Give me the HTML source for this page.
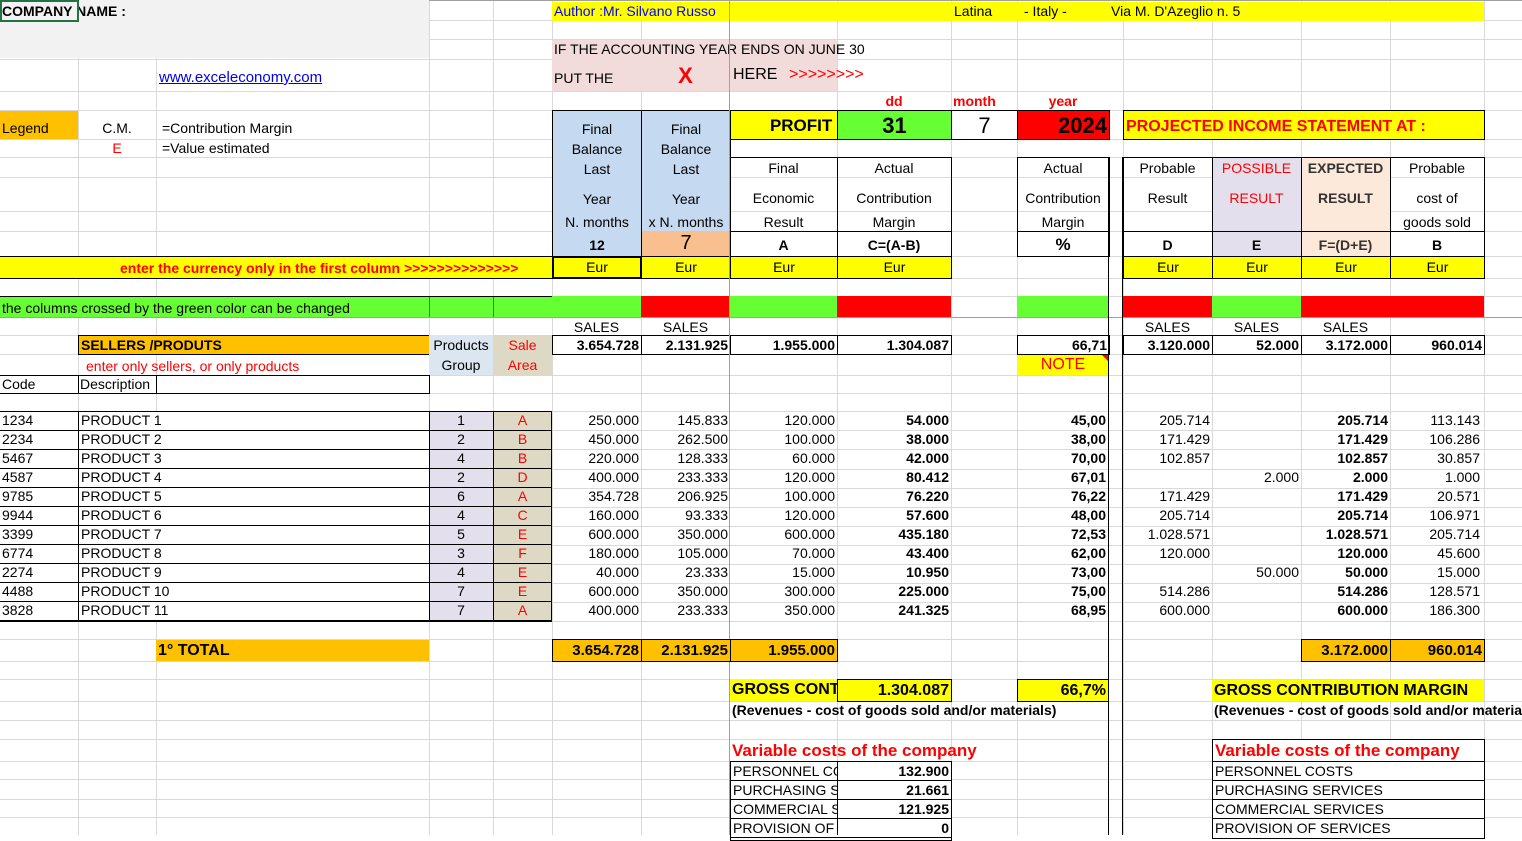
<!DOCTYPE html>
<html><head><meta charset="utf-8"><style>
body{margin:0;width:1522px;height:835px;overflow:hidden;background:#fff;position:relative;font-family:"Liberation Sans",Arial,sans-serif;color:#000}
.c{position:absolute;box-sizing:border-box;padding:0 2px;white-space:nowrap;overflow:hidden;font-size:14px}
.r{text-align:right}.m{text-align:center}.b{font-weight:bold}.k{border:1px solid #000}.red{color:#f00}
.y{background:#ffff00}.g{background:#66ff33}.rd{background:#ff0000}.o{background:#ffc000}.bl{background:#c5d9f1}.lv{background:#e4dfec}.pc{background:#fde9d9}.tn{background:#ddd9c4}.lb{background:#dce6f1}
</style></head><body>
<svg width="1522" height="835" style="position:absolute;left:0;top:0" stroke="#d9d9d9" stroke-width="1">
<g id="h">
<line x1="0" x2="1522" y1="20.5" y2="20.5"/><line x1="0" x2="1522" y1="39.5" y2="39.5"/><line x1="0" x2="1522" y1="59.5" y2="59.5"/><line x1="0" x2="1522" y1="91.5" y2="91.5"/><line x1="0" x2="1522" y1="110.5" y2="110.5"/><line x1="0" x2="1522" y1="139.5" y2="139.5"/><line x1="0" x2="1522" y1="157.5" y2="157.5"/><line x1="0" x2="1522" y1="177.5" y2="177.5"/><line x1="0" x2="1522" y1="211.5" y2="211.5"/><line x1="0" x2="1522" y1="231.5" y2="231.5"/><line x1="0" x2="1522" y1="256.5" y2="256.5"/><line x1="0" x2="1522" y1="278.5" y2="278.5"/><line x1="0" x2="1522" y1="296.5" y2="296.5"/><line x1="0" x2="1522" y1="335.5" y2="335.5"/><line x1="0" x2="1522" y1="354.5" y2="354.5"/><line x1="0" x2="1522" y1="375.5" y2="375.5"/><line x1="0" x2="1522" y1="393.5" y2="393.5"/><line x1="0" x2="1522" y1="411.5" y2="411.5"/><line x1="0" x2="1522" y1="430.5" y2="430.5"/><line x1="0" x2="1522" y1="449.5" y2="449.5"/><line x1="0" x2="1522" y1="469.5" y2="469.5"/><line x1="0" x2="1522" y1="488.5" y2="488.5"/><line x1="0" x2="1522" y1="507.5" y2="507.5"/><line x1="0" x2="1522" y1="526.5" y2="526.5"/><line x1="0" x2="1522" y1="545.5" y2="545.5"/><line x1="0" x2="1522" y1="564.5" y2="564.5"/><line x1="0" x2="1522" y1="583.5" y2="583.5"/><line x1="0" x2="1522" y1="602.5" y2="602.5"/><line x1="0" x2="1522" y1="621.5" y2="621.5"/><line x1="0" x2="1522" y1="639.5" y2="639.5"/><line x1="0" x2="1522" y1="661.5" y2="661.5"/><line x1="0" x2="1522" y1="679.5" y2="679.5"/><line x1="0" x2="1522" y1="701.5" y2="701.5"/><line x1="0" x2="1522" y1="720.5" y2="720.5"/><line x1="0" x2="1522" y1="739.5" y2="739.5"/><line x1="0" x2="1522" y1="761.5" y2="761.5"/><line x1="0" x2="1522" y1="779.5" y2="779.5"/><line x1="0" x2="1522" y1="799.5" y2="799.5"/><line x1="0" x2="1522" y1="817.5" y2="817.5"/>
</g>
<line x1="78.5" x2="78.5" y1="0" y2="835"/><line x1="156.5" x2="156.5" y1="0" y2="835"/><line x1="429.5" x2="429.5" y1="0" y2="835"/><line x1="493.5" x2="493.5" y1="0" y2="835"/><line x1="552.5" x2="552.5" y1="0" y2="835"/><line x1="641.5" x2="641.5" y1="0" y2="835"/><line x1="837.5" x2="837.5" y1="0" y2="835"/><line x1="951.5" x2="951.5" y1="0" y2="835"/><line x1="1017.5" x2="1017.5" y1="0" y2="835"/><line x1="1123.5" x2="1123.5" y1="0" y2="835"/><line x1="1212.5" x2="1212.5" y1="0" y2="835"/><line x1="1301.5" x2="1301.5" y1="0" y2="835"/><line x1="1390.5" x2="1390.5" y1="0" y2="835"/><line x1="1484.5" x2="1484.5" y1="0" y2="835"/>
<line x1="0" x2="1522" y1="317.5" y2="317.5" stroke="#a0a0a0"/>
<line x1="0" x2="1522" y1="0.5" y2="0.5" stroke="#a0a0a0"/>
</svg>

<div class="c" style="left:0;top:1;width:429px;height:58px;background:#f2f2f2"></div>
<div class="c b" style="left:0;top:1px;width:429px;height:20px;line-height:20px">COMPANY NAME :</div>
<div class="c" style="left:0;top:0;width:79px;height:22px;border:2px solid #217346;padding:0"></div>
<div class="c y" style="left:552px;top:2px;width:932px;height:19px;line-height:19px;color:#0000ff">Author :Mr. Silvano Russo</div>
<div class="c" style="left:952px;top:2px;width:70px;height:19px;line-height:19px">Latina</div>
<div class="c" style="left:1022px;top:2px;width:80px;height:19px;line-height:19px">- Italy -</div>
<div class="c" style="left:1109px;top:2px;width:200px;height:19px;line-height:19px">Via M. D'Azeglio n. 5</div>

<div class="c" style="left:552px;top:40px;width:285px;height:51px;background:#f2dcdb"></div>
<div class="c" style="left:552px;top:40px;width:320px;height:19px;line-height:19px">IF THE ACCOUNTING YEAR ENDS ON JUNE 30</div>
<div class="c" style="left:552px;top:66px;width:90px;height:24px;line-height:24px">PUT THE</div>
<div class="c b red m" style="left:641px;top:62px;width:89px;height:28px;line-height:28px;font-size:22px">X</div>
<div class="c" style="left:731px;top:63px;width:60px;height:24px;line-height:24px;font-size:16px">HERE</div>
<div class="c red" style="left:787px;top:63px;width:100px;height:24px;line-height:24px;font-size:16px">&gt;&gt;&gt;&gt;&gt;&gt;&gt;&gt;</div>
<div class="c" style="left:157px;top:66px;width:220px;height:24px;line-height:24px;font-size:15px;color:#0000ee;text-decoration:underline">www.exceleconomy.com</div>

<div class="c b red m" style="left:837px;top:91px;width:114px;height:19px;line-height:20px">dd</div>
<div class="c b red" style="left:951px;top:91px;width:66px;height:19px;line-height:20px">month</div>
<div class="c b red m" style="left:1017px;top:91px;width:92px;height:19px;line-height:20px">year</div>

<div class="c o" style="left:0;top:111px;width:78px;height:28px;line-height:34px">Legend</div>
<div class="c m" style="left:78px;top:111px;width:78px;height:28px;line-height:34px">C.M.</div>
<div class="c" style="left:160px;top:111px;width:260px;height:28px;line-height:34px">=Contribution Margin</div>
<div class="c m red" style="left:78px;top:139px;width:78px;height:18px;line-height:18px">E</div>
<div class="c" style="left:160px;top:139px;width:260px;height:18px;line-height:18px">=Value estimated</div>

<div class="c bl k m" style="left:552px;top:110px;width:90px;height:147px;padding:0;line-height:20px"><div style="height:8px"></div>Final<br>Balance<br>Last<div style="height:10px"></div>Year<div style="line-height:26px">N. months</div><div class="b" style="line-height:20px">12</div></div>
<div class="c bl k m" style="left:641px;top:110px;width:90px;height:147px;padding:0;line-height:20px"><div style="height:8px"></div>Final<br>Balance<br>Last<div style="height:10px"></div>Year<div style="line-height:26px">x N. months</div></div>
<div class="c m" style="left:642px;top:231px;width:88px;height:25px;line-height:25px;background:#fabf8f;font-size:20px">7</div>

<div class="c y k b r" style="left:730px;top:110px;width:108px;height:30px;line-height:30px;font-size:17px;padding-right:0">PROFIT&nbsp;</div>
<div class="c g k b m" style="left:837px;top:110px;width:115px;height:30px;line-height:30px;font-size:22px">31</div>
<div class="c k m" style="left:951px;top:110px;width:67px;height:30px;line-height:30px;font-size:22px">7</div>
<div class="c rd k b r" style="left:1017px;top:110px;width:93px;height:30px;line-height:30px;font-size:22px">2024</div>
<div class="c y k b red" style="left:1123px;top:110px;width:362px;height:30px;line-height:32px;font-size:16px">PROJECTED INCOME STATEMENT AT :</div>

<div class="c k" style="left:730px;top:157px;width:222px;height:100px"></div>
<div class="c" style="left:837px;top:157px;width:1px;height:100px;background:#000;padding:0"></div>
<div class="c" style="left:730px;top:231px;width:221px;height:1px;background:#000;padding:0"></div>
<div class="c k" style="left:1017px;top:157px;width:93px;height:100px"></div>
<div class="c" style="left:1017px;top:231px;width:92px;height:1px;background:#000;padding:0"></div>
<div class="c lv" style="left:1212px;top:157px;width:89px;height:99px"></div>
<div class="c pc" style="left:1301px;top:157px;width:89px;height:99px"></div>
<div class="c k" style="left:1123px;top:157px;width:362px;height:100px"></div>
<div class="c" style="left:1212px;top:157px;width:1px;height:100px;background:#000;padding:0"></div>
<div class="c" style="left:1301px;top:157px;width:1px;height:100px;background:#000;padding:0"></div>
<div class="c" style="left:1390px;top:157px;width:1px;height:100px;background:#000;padding:0"></div>
<div class="c" style="left:1123px;top:231px;width:361px;height:1px;background:#000;padding:0"></div>

<div class="c m" style="left:730px;top:158px;width:107px;height:20px;line-height:20px">Final</div>
<div class="c m" style="left:837px;top:158px;width:114px;height:20px;line-height:20px">Actual</div>
<div class="c m" style="left:1017px;top:158px;width:92px;height:20px;line-height:20px">Actual</div>
<div class="c m" style="left:1123px;top:158px;width:89px;height:20px;line-height:20px">Probable</div>
<div class="c m red" style="left:1212px;top:158px;width:89px;height:20px;line-height:20px">POSSIBLE</div>
<div class="c m b" style="left:1301px;top:158px;width:89px;height:20px;line-height:20px;color:#333">EXPECTED</div>
<div class="c m" style="left:1390px;top:158px;width:94px;height:20px;line-height:20px">Probable</div>

<div class="c m" style="left:730px;top:188px;width:107px;height:20px;line-height:20px">Economic</div>
<div class="c m" style="left:837px;top:188px;width:114px;height:20px;line-height:20px">Contribution</div>
<div class="c m" style="left:1017px;top:188px;width:92px;height:20px;line-height:20px">Contribution</div>
<div class="c m" style="left:1123px;top:188px;width:89px;height:20px;line-height:20px">Result</div>
<div class="c m red" style="left:1212px;top:188px;width:89px;height:20px;line-height:20px">RESULT</div>
<div class="c m b" style="left:1301px;top:188px;width:89px;height:20px;line-height:20px;color:#333">RESULT</div>
<div class="c m" style="left:1390px;top:188px;width:94px;height:20px;line-height:20px">cost of</div>

<div class="c m" style="left:730px;top:212px;width:107px;height:20px;line-height:20px">Result</div>
<div class="c m" style="left:837px;top:212px;width:114px;height:20px;line-height:20px">Margin</div>
<div class="c m" style="left:1017px;top:212px;width:92px;height:20px;line-height:20px">Margin</div>
<div class="c m" style="left:1390px;top:212px;width:94px;height:20px;line-height:20px">goods sold</div>

<div class="c m b" style="left:730px;top:233px;width:107px;height:23px;line-height:25px">A</div>
<div class="c m b" style="left:837px;top:233px;width:114px;height:23px;line-height:25px">C=(A-B)</div>
<div class="c m b" style="left:1017px;top:233px;width:92px;height:23px;line-height:23px;font-size:17px">%</div>
<div class="c m b" style="left:1123px;top:233px;width:89px;height:23px;line-height:25px">D</div>
<div class="c m b" style="left:1212px;top:233px;width:89px;height:23px;line-height:25px">E</div>
<div class="c m b" style="left:1301px;top:233px;width:89px;height:23px;line-height:25px;color:#333">F=(D+E)</div>
<div class="c m b" style="left:1390px;top:233px;width:94px;height:23px;line-height:25px">B</div>

<div class="c y" style="left:0;top:256px;width:552px;height:23px;border-top:1px solid #000;border-bottom:1px solid #000"></div>
<div class="c b red" style="left:118px;top:257px;width:430px;height:21px;line-height:22px">enter the currency only in the first column &gt;&gt;&gt;&gt;&gt;&gt;&gt;&gt;&gt;&gt;&gt;&gt;&gt;&gt;</div>
<div class="c y m" style="left:552px;top:256px;width:90px;height:23px;line-height:19px;border:2px solid #000">Eur</div>
<div class="c y k m" style="left:641px;top:256px;width:90px;height:23px;line-height:21px">Eur</div>
<div class="c y k m" style="left:730px;top:256px;width:108px;height:23px;line-height:21px">Eur</div>
<div class="c y k m" style="left:837px;top:256px;width:115px;height:23px;line-height:21px">Eur</div>
<div class="c y k m" style="left:1123px;top:256px;width:90px;height:23px;line-height:21px">Eur</div>
<div class="c y k m" style="left:1212px;top:256px;width:90px;height:23px;line-height:21px">Eur</div>
<div class="c y k m" style="left:1301px;top:256px;width:90px;height:23px;line-height:21px">Eur</div>
<div class="c y k m" style="left:1390px;top:256px;width:95px;height:23px;line-height:21px">Eur</div>

<div class="c g" style="left:0;top:296px;width:552px;height:21px;line-height:22px;border-top:1px solid #000">the columns crossed by the green color can be changed</div>
<div class="c" style="left:429px;top:297px;width:1px;height:20px;background:#666;padding:0"></div>
<div class="c" style="left:493px;top:297px;width:1px;height:20px;background:#666;padding:0"></div>
<div class="c g" style="left:552px;top:296px;width:89px;height:21px"></div>
<div class="c rd" style="left:641px;top:296px;width:89px;height:21px"></div>
<div class="c g" style="left:730px;top:296px;width:107px;height:21px"></div>
<div class="c rd" style="left:837px;top:296px;width:114px;height:21px"></div>
<div class="c g" style="left:1017px;top:296px;width:92px;height:21px"></div>
<div class="c rd" style="left:1123px;top:296px;width:89px;height:21px"></div>
<div class="c g" style="left:1212px;top:296px;width:89px;height:21px"></div>
<div class="c rd" style="left:1301px;top:296px;width:183px;height:21px"></div>

<div class="c m" style="left:552px;top:318px;width:89px;height:18px;line-height:18px">SALES</div>
<div class="c m" style="left:641px;top:318px;width:89px;height:18px;line-height:18px">SALES</div>
<div class="c m" style="left:1123px;top:318px;width:89px;height:18px;line-height:18px">SALES</div>
<div class="c m" style="left:1212px;top:318px;width:89px;height:18px;line-height:18px">SALES</div>
<div class="c m" style="left:1301px;top:318px;width:89px;height:18px;line-height:18px">SALES</div>

<div class="c o k b" style="left:78px;top:335px;width:352px;height:20px;line-height:19px">SELLERS /PRODUTS</div>
<div class="c lb m" style="left:429px;top:335px;width:64px;height:40px;line-height:20px;padding:0">Products<br>Group</div>
<div class="c tn m red" style="left:493px;top:335px;width:59px;height:40px;line-height:20px">Sale<br>Area</div>
<div class="c k b r" style="left:552px;top:335px;width:90px;height:20px;line-height:19px">3.654.728</div>
<div class="c k b r" style="left:641px;top:335px;width:90px;height:20px;line-height:19px">2.131.925</div>
<div class="c k b r" style="left:730px;top:335px;width:108px;height:20px;line-height:19px">1.955.000</div>
<div class="c k b r" style="left:837px;top:335px;width:115px;height:20px;line-height:19px">1.304.087</div>
<div class="c k b r" style="left:1017px;top:335px;width:93px;height:20px;line-height:19px">66,71</div>
<div class="c k b r" style="left:1123px;top:335px;width:90px;height:20px;line-height:19px">3.120.000</div>
<div class="c k b r" style="left:1212px;top:335px;width:90px;height:20px;line-height:19px">52.000</div>
<div class="c k b r" style="left:1301px;top:335px;width:90px;height:20px;line-height:19px">3.172.000</div>
<div class="c k b r" style="left:1390px;top:335px;width:95px;height:20px;line-height:19px">960.014</div>
<div class="c red" style="left:84px;top:356px;width:345px;height:20px;line-height:20px">enter only sellers, or only products</div>
<div class="c y m red" style="left:1017px;top:355px;width:92px;height:20px;line-height:20px;font-size:16px">NOTE</div>
<div class="c" style="left:1102px;top:355px;width:0;height:0;border-left:7px solid transparent;border-top:7px solid #f00;padding:0"></div>
<div class="c" style="left:0;top:375px;width:430px;height:19px;border-top:1px solid #000;border-bottom:1px solid #000"></div>
<div class="c" style="left:0;top:376px;width:78px;height:17px;line-height:17px">Code</div>
<div class="c" style="left:78px;top:375px;width:79px;height:19px;line-height:17px;border:1px solid #000;padding:0 1px">Description</div>
<div class="c" style="left:429px;top:375px;width:1px;height:19px;background:#000;padding:0"></div>

<div class="c" style="left:1108px;top:157px;width:1px;height:678px;background:#000;padding:0"></div>
<div class="c" style="left:1122px;top:157px;width:1px;height:678px;background:#000;padding:0"></div>
<div class="c" style="left:729px;top:0;width:1px;height:835px;background:#a0a0a0;padding:0"></div>

<div class="c" style="left:0;top:411px;width:552px;height:211px;border-top:1px solid #000;border-bottom:1px solid #000;padding:0;background:repeating-linear-gradient(#fff 0 18px,#000 18px 19px)"></div>
<div class="c lv" style="left:429px;top:412px;width:64px;height:209px;background:repeating-linear-gradient(#e4dfec 0 18px,#000 18px 19px)"></div>
<div class="c tn" style="left:493px;top:412px;width:59px;height:209px;background:repeating-linear-gradient(#ddd9c4 0 18px,#000 18px 19px)"></div>
<div class="c" style="left:0;top:412px;width:78px;height:209px;background:repeating-linear-gradient(#fff 0 18px,#000 18px 19px)"></div>
<div class="c" style="left:78px;top:411px;width:1px;height:211px;background:#000;padding:0"></div>
<div class="c" style="left:429px;top:411px;width:1px;height:211px;background:#000;padding:0"></div>
<div class="c" style="left:493px;top:411px;width:1px;height:211px;background:#000;padding:0"></div>
<div class="c" style="left:551px;top:411px;width:1px;height:211px;background:#000;padding:0"></div>

<div style="position:absolute;left:0;top:411px;line-height:19px">
<div class="c" style="left:0;top:0;width:78px;line-height:19px">1234<br>2234<br>5467<br>4587<br>9785<br>9944<br>3399<br>6774<br>2274<br>4488<br>3828</div>
<div class="c" style="left:79px;top:0;width:350px;line-height:19px">PRODUCT 1<br>PRODUCT 2<br>PRODUCT 3<br>PRODUCT 4<br>PRODUCT 5<br>PRODUCT 6<br>PRODUCT 7<br>PRODUCT 8<br>PRODUCT 9<br>PRODUCT 10<br>PRODUCT 11</div>
<div class="c m" style="left:429px;top:0;width:64px;line-height:19px">1<br>2<br>4<br>2<br>6<br>4<br>5<br>3<br>4<br>7<br>7</div>
<div class="c m red" style="left:493px;top:0;width:59px;line-height:19px">A<br>B<br>B<br>D<br>A<br>C<br>E<br>F<br>E<br>E<br>A</div>
<div class="c r" style="left:552px;top:0;width:89px;line-height:19px">250.000<br>450.000<br>220.000<br>400.000<br>354.728<br>160.000<br>600.000<br>180.000<br>40.000<br>600.000<br>400.000</div>
<div class="c r" style="left:641px;top:0;width:89px;line-height:19px">145.833<br>262.500<br>128.333<br>233.333<br>206.925<br>93.333<br>350.000<br>105.000<br>23.333<br>350.000<br>233.333</div>
<div class="c r" style="left:730px;top:0;width:107px;line-height:19px">120.000<br>100.000<br>60.000<br>120.000<br>100.000<br>120.000<br>600.000<br>70.000<br>15.000<br>300.000<br>350.000</div>
<div class="c r b" style="left:837px;top:0;width:114px;line-height:19px">54.000<br>38.000<br>42.000<br>80.412<br>76.220<br>57.600<br>435.180<br>43.400<br>10.950<br>225.000<br>241.325</div>
<div class="c r b" style="left:1017px;top:0;width:91px;line-height:19px">45,00<br>38,00<br>70,00<br>67,01<br>76,22<br>48,00<br>72,53<br>62,00<br>73,00<br>75,00<br>68,95</div>
<div class="c r" style="left:1123px;top:0;width:89px;line-height:19px">205.714<br>171.429<br>102.857<br>&nbsp;<br>171.429<br>205.714<br>1.028.571<br>120.000<br>&nbsp;<br>514.286<br>600.000</div>
<div class="c r" style="left:1212px;top:0;width:89px;line-height:19px">&nbsp;<br>&nbsp;<br>&nbsp;<br>2.000<br>&nbsp;<br>&nbsp;<br>&nbsp;<br>&nbsp;<br>50.000<br>&nbsp;<br>&nbsp;</div>
<div class="c r b" style="left:1301px;top:0;width:89px;line-height:19px">205.714<br>171.429<br>102.857<br>2.000<br>171.429<br>205.714<br>1.028.571<br>120.000<br>50.000<br>514.286<br>600.000</div>
<div class="c r" style="left:1390px;top:0;width:92px;line-height:19px">113.143<br>106.286<br>30.857<br>1.000<br>20.571<br>106.971<br>205.714<br>45.600<br>15.000<br>128.571<br>186.300</div>
</div>

<div class="c o b" style="left:156px;top:640px;width:273px;height:21px;line-height:21px;font-size:16px">1° TOTAL</div>
<div class="c o k b r" style="left:552px;top:639px;width:90px;height:23px;line-height:21px;font-size:15px">3.654.728</div>
<div class="c o k b r" style="left:641px;top:639px;width:90px;height:23px;line-height:21px;font-size:15px">2.131.925</div>
<div class="c o k b r" style="left:730px;top:639px;width:108px;height:23px;line-height:21px;font-size:15px">1.955.000</div>
<div class="c o k b r" style="left:1301px;top:639px;width:90px;height:23px;line-height:21px;font-size:15px">3.172.000</div>
<div class="c o k b r" style="left:1390px;top:639px;width:95px;height:23px;line-height:21px;font-size:15px">960.014</div>

<div class="c y b" style="left:730px;top:679px;width:107px;height:22px;line-height:22px;font-size:16px">GROSS CONT</div>
<div class="c y k b r" style="left:837px;top:679px;width:115px;height:23px;line-height:21px;font-size:16px">1.304.087</div>
<div class="c y k b r" style="left:1017px;top:679px;width:92px;height:23px;line-height:21px;font-size:16px">66,7%</div>
<div class="c y b" style="left:1212px;top:680px;width:272px;height:21px;line-height:21px;font-size:16px">GROSS CONTRIBUTION MARGIN</div>
<div class="c b" style="left:730px;top:701px;width:378px;height:19px;line-height:19px">(Revenues - cost of goods sold and/or materials)</div>
<div class="c b" style="left:1212px;top:701px;width:310px;height:19px;line-height:19px">(Revenues - cost of goods sold and/or materials)</div>

<div class="c b red" style="left:730px;top:740px;width:378px;height:21px;line-height:22px;font-size:17px">Variable costs of the company</div>
<div class="c k" style="left:730px;top:761px;width:222px;height:80px;background:repeating-linear-gradient(#fff 0 18px,#000 18px 19px)"></div>
<div class="c" style="left:837px;top:761px;width:1px;height:74px;background:#000;padding:0"></div>
<div class="c" style="left:731px;top:762px;width:106px;line-height:19px">PERSONNEL COSTS<br>PURCHASING SERVICES<br>COMMERCIAL SERVICES<br>PROVISION OF SERVICES</div>
<div class="c r b" style="left:838px;top:762px;width:113px;line-height:19px">132.900<br>21.661<br>121.925<br>0</div>

<div class="c k" style="left:1212px;top:739px;width:273px;height:100px;background:repeating-linear-gradient(#fff 0 21px,#000 21px 22px,#fff 22px 40px,#000 40px 41px,#fff 41px 59px,#000 59px 60px,#fff 60px 78px,#000 78px 79px,#fff 79px 100px)"></div>
<div class="c b red" style="left:1213px;top:740px;width:270px;height:21px;line-height:22px;font-size:17px">Variable costs of the company</div>
<div class="c" style="left:1213px;top:762px;width:270px;line-height:19px">PERSONNEL COSTS<br>PURCHASING SERVICES<br>COMMERCIAL SERVICES<br>PROVISION OF SERVICES</div>
</body></html>
